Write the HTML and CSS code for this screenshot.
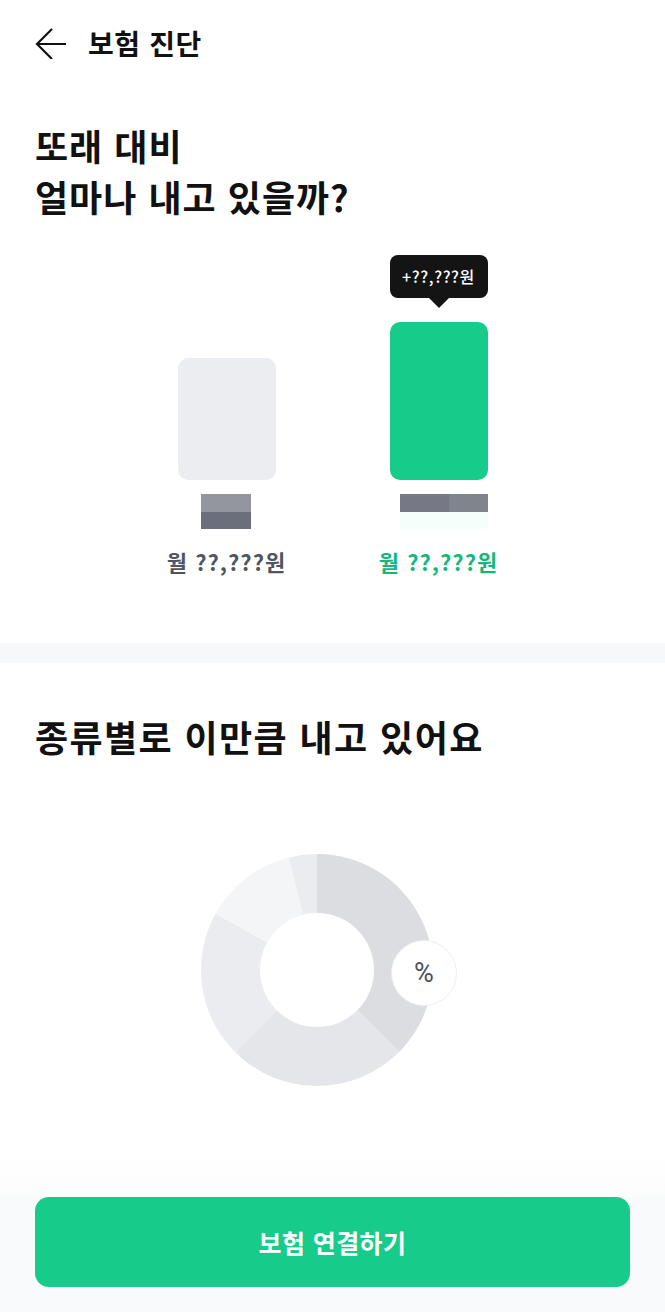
FILE: index.html
```html
<!DOCTYPE html>
<html lang="ko">
<head>
<meta charset="utf-8">
<title>보험 진단</title>
<link rel="stylesheet" href="styles.css">
</head>
<body>
<div class="page">
  <header class="topbar">
    <svg class="back" width="32" height="32" viewBox="0 0 32 32" aria-hidden="true">
      <path d="M17 2 L2 17 L17 32 M2 17 H31" fill="none" stroke="#111" stroke-width="2.2" stroke-linecap="butt" stroke-linejoin="miter"/>
    </svg>
    <h1 class="topbar-title">보험 진단</h1>
  </header>

  <main class="main">
    <section class="section compare">
      <h2 class="heading">또래 대비<br>얼마나 내고 있을까?</h2>
      <div class="bars">
        <div class="bar-col">
          <div class="bar bar-peer"></div>
          <div class="mosaic mosaic-left">
            <span class="mz mz-a"></span>
            <span class="mz mz-b"></span>
          </div>
          <div class="amount amount-peer">월 ??,???원</div>
        </div>
        <div class="bar-col">
          <div class="tip">+??,???원</div>
          <div class="bar bar-me"></div>
          <div class="mosaic mosaic-right">
            <span class="mz mz-c"></span>
            <span class="mz mz-d"></span>
          </div>
          <div class="amount amount-me">월 ??,???원</div>
        </div>
      </div>
    </section>

    <div class="band"></div>

    <section class="section kinds">
      <h2 class="heading heading-wide">종류별로 이만큼 내고 있어요</h2>
      <div class="donut-wrap">
        <div class="donut-box">
          <svg class="donut" width="236" height="236" viewBox="0 0 236 236" aria-hidden="true">
            <path d="M118 118 L118 2 A116 116 0 0 1 200.02 200.02 Z" fill="#dcdde1"/>
            <path d="M118 118 L200.02 200.02 A116 116 0 0 1 35.98 200.02 Z" fill="#e5e6ea"/>
            <path d="M118 118 L35.98 200.02 A116 116 0 0 1 16.54 61.76 Z" fill="#ebecf0"/>
            <path d="M118 118 L16.54 61.76 A116 116 0 0 1 89.94 5.44 Z" fill="#f4f5f7"/>
            <path d="M118 118 L89.94 5.44 A116 116 0 0 1 118 2 Z" fill="#ebecef"/>
            <circle cx="118" cy="118" r="57" fill="#fff"/>
          </svg>
          <div class="pct">%</div>
        </div>
      </div>
    </section>
  </main>

  <footer class="footer">
    <div class="fade"></div>
    <div class="cta-area">
      <button class="cta" type="button">보험 연결하기</button>
    </div>
  </footer>
</div>
</body>
</html>
```

FILE: styles.css
```css
* { box-sizing: border-box; }

html, body {
  margin: 0;
  padding: 0;
  background: #fff;
}

body {
  font-family: "Noto Sans CJK KR", "Noto Sans", sans-serif;
  color: #111;
}

.page {
  display: flex;
  flex-direction: column;
  min-height: 1312px;
}

.topbar {
  height: 86px;
  display: flex;
  align-items: center;
  padding-left: 35px;
  gap: 21px;
}

.back {
  display: block;
  margin-top: -1px;
}

.topbar-title {
  margin: 0;
  font-size: 28px;
  font-weight: 700;
  line-height: 1;
  letter-spacing: 0.6px;
}

.main {
  flex: 1;
}

.section {
  padding: 0 35px;
}

.heading {
  margin: 0;
  font-size: 36px;
  line-height: 51px;
  font-weight: 700;
  letter-spacing: 1px;
}

.heading-wide {
  letter-spacing: 1.4px;
}

.compare {
  padding-top: 34px;
  padding-bottom: 69px;
}

.bars {
  margin-top: 33px;
  display: flex;
  justify-content: center;
  align-items: flex-end;
  gap: 114px;
}

.bar-col {
  width: 98px;
  display: flex;
  flex-direction: column;
  align-items: center;
}

.bar {
  width: 98px;
  border-radius: 10px;
}

.bar-peer {
  height: 122px;
  background: #ecedf1;
}

.bar-me {
  height: 158px;
  background: #17cc8a;
}

.tip {
  position: relative;
  width: 98px;
  height: 43px;
  margin-bottom: 24px;
  background: #141414;
  border-radius: 8px;
  color: #fff;
  font-size: 16px;
  font-weight: 500;
  line-height: 43px;
  text-align: center;
  letter-spacing: 0.6px;
}

.tip::after {
  content: "";
  position: absolute;
  left: 50%;
  bottom: -10px;
  margin-left: -10px;
  border-left: 10px solid transparent;
  border-right: 10px solid transparent;
  border-top: 10px solid #141414;
}

.mosaic {
  margin-top: 14px;
  display: flex;
  flex-direction: column;
  align-self: flex-start;
}

.mz {
  display: block;
  height: 17.5px;
}

.mosaic-left { margin-left: 23px; width: 50px; }
.mosaic-right { margin-left: 10px; width: 88px; }

.mz-a { background: #93969e; }
.mz-b { background: #6b6e7b; }
.mz-c { background: linear-gradient(90deg, #767985 0 56%, #80848c 56% 100%); }
.mz-d { background: #f4fffc; }

.amount {
  margin-top: 19px;
  white-space: nowrap;
  font-size: 22px;
  line-height: 26px;
  font-weight: 700;
  letter-spacing: 1px;
}

.amount-peer { color: #4f5563; }
.amount-me { color: #15b77d; }

.band {
  height: 20px;
  background: #f7f8fa;
}

.kinds {
  padding-top: 48px;
}

.donut-wrap {
  margin-top: 90px;
  display: flex;
  justify-content: center;
}

.donut-box {
  position: relative;
  width: 264px;
  height: 236px;
  margin-left: -3px;
}

.donut {
  display: block;
}

.pct {
  position: absolute;
  left: 192px;
  top: 88px;
  width: 66px;
  height: 66px;
  border-radius: 50%;
  background: #fff;
  border: 1px solid #eeeff1;
  color: #4a5060;
  font-family: "Roboto", "Noto Sans", sans-serif;
  font-size: 27px;
  line-height: 64px;
  text-align: center;
}

.footer {
  display: flex;
  flex-direction: column;
}

.fade {
  height: 47px;
  background: linear-gradient(180deg, rgba(249, 250, 251, 0) 0%, rgba(249, 250, 251, 0.6) 100%);
}

.cta-area {
  background: #f9fafb;
  padding: 0 35px 25px;
}

.cta {
  display: block;
  width: 100%;
  height: 90px;
  border: 0;
  border-radius: 14px;
  background: #17cc8a;
  color: #fff;
  font-family: "Noto Sans CJK KR", "Noto Sans", sans-serif;
  font-size: 25px;
  font-weight: 700;
  letter-spacing: 0.4px;
}
```
